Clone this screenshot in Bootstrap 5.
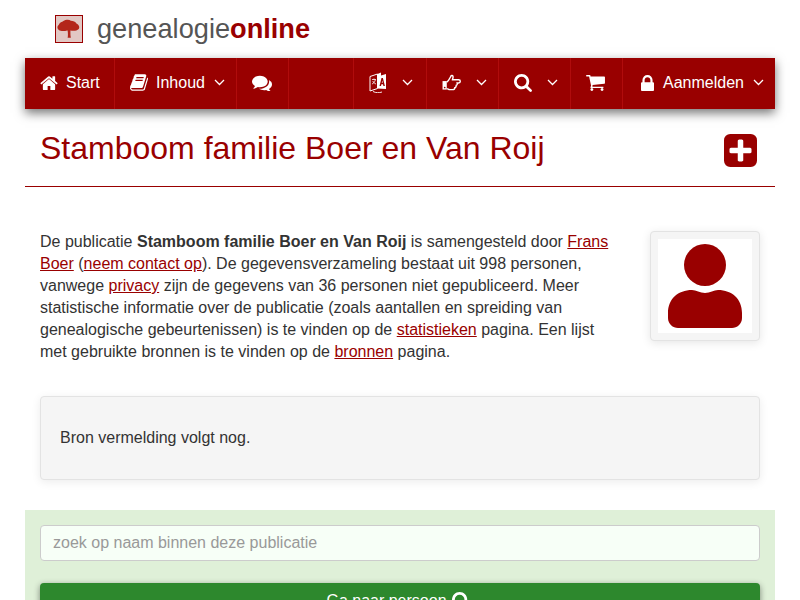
<!DOCTYPE html>
<html lang="nl">
<head>
  <meta charset="UTF-8">
  <title>Stamboom familie Boer en Van Roij</title>
  <meta name="viewport" content="width=device-width, initial-scale=1">
  <link href="https://cdn.jsdelivr.net/npm/bootstrap@5.3.0/dist/css/bootstrap.min.css" rel="stylesheet">
  <style>
    body {
      font-family: "Liberation Sans", Arial, sans-serif;
      font-size: 16px;
      line-height: 22px;
      color: #333;
      background: #fff;
    }
    a { color: #900; }
    svg { fill: currentColor; display: block; }
    .page-wrap { width: 750px; margin: 0 auto; }

    .site-head { height: 58px; padding-left: 30px; gap: 14px; }
    .site-logo { width: 28px; height: 28px; border: 1px solid #900; background: #e2c8c4; color: #b3261a; }
    .site-logo svg { filter: blur(.4px); }
    .site-name { font-size: 27.2px; color: #555; }
    .site-name b { color: #900; }

    .main-nav {
      height: 51px;
      padding: 0;
      background: #900;
      box-shadow: 0 4px 10px rgba(0, 0, 0, .55);
      flex-wrap: nowrap;
    }
    .main-nav.navbar-expand .navbar-nav .nav-link {
      height: 51px;
      padding: 0 0 2px 15px;
      gap: 8px;
      color: #fff;
      border-right: 1px solid #b00c0c;
    }
    .main-nav.navbar-expand .navbar-nav .nav-last .nav-link { border-right: 0; padding-left: 18px; gap: 9px; }
    .nav-pre { border-right: 1px solid #b00c0c; width: 65px; height: 51px; }
    .nav-w52 { width: 52px; }
    .nav-w72 { width: 72px; }
    .nav-w73 { width: 73px; }
    .nav-w90 { width: 90px; }
    .nav-w122 { width: 122px; }
    .nav-w152 { width: 152px; }
    .nav-drop { width: 11px; height: 7px; margin-left: 1px; fill: none; stroke: #fff; stroke-width: 1.3; }
    .nav-drop-far { margin-left: 7px; }

    .title-row { height: 78px; padding: 0 18px 0 15px; border-bottom: 1px solid #900; }
    .title-row h1 { font-size: 32px; line-height: 36px; margin: 1px 0 0; color: #900; font-weight: 400; }
    .add-icon { width: 33px; height: 33px; color: #900; margin-top: 5px; }

    .intro-row { padding: 44px 15px 0; gap: 25px; }
    .intro-text { width: 585px; margin: 0; }
    .person-thumb {
      width: 110px;
      height: 110px;
      padding: 7px;
      background: #f5f5f5;
      border: 1px solid #e3e3e3;
      border-radius: 4px;
      box-shadow: 0 2px 10px rgba(0, 0, 0, .1);
    }
    .person-thumb svg { background: #fff; color: #900; }

    .source-box {
      margin: 33px 15px 30px;
      padding: 30px 19px;
      background: #f5f5f5;
      border: 1px solid #e3e3e3;
      border-radius: 4px;
      box-shadow: 0 2px 10px rgba(0, 0, 0, .08);
    }

    .find-box { background: #dff0d8; padding: 15px; }
    .find-box .form-control {
      height: 36px;
      padding: 6px 12px;
      font-size: 16px;
      line-height: 22px;
      color: #333;
      background: #f7fff7;
      border-color: #ccc;
      border-radius: 4px;
      margin-bottom: 22px;
    }
    .find-box .form-control::placeholder { color: #999; }
    .find-btn {
      height: 36px;
      padding: 6px 16px 6px 12px;
      font-size: 16px;
      line-height: 22px;
      color: #fff;
      background: #2d882d;
      border: 0;
      border-radius: 4px;
      box-shadow: 0 2px 6px rgba(0, 0, 0, .45);
      gap: 5px;
    }
  </style>
</head>
<body>

<div class="page-wrap">

  <div class="site-head d-flex align-items-center">
    <div class="site-logo">
      <svg viewBox="0 0 28 28" width="26" height="26">
        <path d="M12 15.500c-3 1-7 1-9-.5-2-1.500-2-4 0-5.500 1-2.500 3.500-3 5-4 2-1.500 6-2 8-.5 2.500 0 5 1 6 3 2.500 1 4 4 2.500 6-2 2-6 2.500-9 1.500v2c0 2 0 4 .5 6h-3.500c.5-2 .5-5 0-8z"/>
      </svg>
    </div>
    <div class="site-name">genealogie<b>online</b></div>
  </div>

  <nav class="navbar navbar-expand main-nav">
    <ul class="navbar-nav">
      <li class="nav-item nav-w90">
        <a class="nav-link d-flex align-items-center" href="#">
          <svg viewBox="64 128 1664 1408" width="18" height="15"><path d="M1472 992v480q0 26-19 45t-45 19h-384v-384h-256v384h-384q-26 0-45-19t-19-45v-480q0-1 .5-3t.5-3l575-474 575 474q1 2 1 6zm223-69l-62 74q-8 9-21 11h-3q-13 0-21-7l-692-577-692 577q-12 8-24 7-13-2-21-11l-62-74q-8-10-7-23.500t11-21.500l719-599q32-26 76-26t76 26l244 204v-195q0-14 9-23t23-9h192q14 0 23 9t9 23v408l219 182q10 8 11 21.500t-7 23.500z"/></svg>
          Start
        </a>
      </li>
      <li class="nav-item nav-w122">
        <a class="nav-link d-flex align-items-center" href="#">
          <svg viewBox="64 128 1664 1536" width="18" height="17"><path d="M1703 478q40 57 18 129l-275 906q-19 64-76.500 107.500t-122.500 43.500h-923q-77 0-148.500-53.500t-99.500-131.500q-24-67-2-127 0-4 3-27t4-37q1-8-3-21.500t-3-19.500q2-11 8-21t16.500-23.500 16.500-23.500q23-38 45-91.500t30-91.500q3-10 .5-30t-.5-28q3-11 17-28t17-23q21-36 42-92t25-90q1-9-2.500-32t.5-28q4-13 22-30.500t22-22.500q19-26 42.500-84.500t27.500-96.500q1-8-3-25.500t-2-26.500q2-8 9-18t18-23 17-21q8-12 16.500-30.500t15-35 16-36 19.500-32 26.500-23.500 36-11.500 47.500 5.500l-1 3q38-9 51-9h761q74 0 114 56t18 130l-274 906q-36 119-71.500 153.500t-128.500 34.500h-869q-27 0-38 15-11 16-1 43 24 70 144 70h923q29 0 56-15.500t35-41.500l300-987q7-22 5-57 38 15 59 43zm-1064 2q-4 13 2 22.500t20 9.500h608q13 0 25.500-9.500t16.500-22.500l21-64q4-13-2-22.500t-20-9.500h-608q-13 0-25.500 9.500t-16.500 22.500zm-83 256q-4 13 2 22.500t20 9.500h608q13 0 25.500-9.500t16.500-22.500l21-64q4-13-2-22.500t-20-9.500h-608q-13 0-25.500 9.500t-16.500 22.500z"/></svg>
          Inhoud
          <svg class="nav-drop" viewBox="0 0 11 7"><path d="M1 1l4.500 4.500L10 1"/></svg>
        </a>
      </li>
      <li class="nav-item nav-w52">
        <a class="nav-link d-flex align-items-center" href="#">
          <svg viewBox="0 192 1792 1408" width="20" height="16"><path d="M1408 768q0 139-94 257t-256.500 186.500-353.500 68.500q-86 0-176-16-124 88-278 128-36 9-86 16h-3q-11 0-20.500-8t-11.500-21q-1-3-1-6.500t.5-6.500 2-6l2.500-5 3.500-5.500 4-5 4.500-5 4-4.500q5-6 23-25t26-29.500 22.500-29 25-38.500 20.500-44q-124-72-195-177t-71-224q0-139 94-257t256.500-186.500 353.500-68.500 353.500 68.500 256.500 186.500 94 257zm384 256q0 120-71 224.500t-195 176.500q10 24 20.500 44t25 38.500 22.500 29 26 29.500 23 25q1 1 4 4.500t4.500 5 4 5 3.500 5.500l2.500 5 2 6 .5 6.500-1 6.500q-3 14-13 22t-22 7q-50-7-86-16-154-40-278-128-90 16-176 16-271 0-472-132 58 4 88 4 161 0 309-45t264-129q125-92 192-212t67-254q0-77-23-152 129 71 204 178t75 230z"/></svg>
        </a>
      </li>
    </ul>

    <ul class="navbar-nav ms-auto">
      <li class="nav-item nav-pre"></li>
      <li class="nav-item nav-w73">
        <a class="nav-link d-flex align-items-center" href="#">
          <svg viewBox="0 0 18 21" width="18" height="21">
            <path d="M1 4.500l7.500-2.500v14.500L1 19z" fill="none" stroke="#fff"/>
            <path d="M8.500 2L12 .5v3l5-1.500v15l-8.500-.5z"/>
            <path d="M3 7.500h4M5 6.500v1M6.300 8c-.5 2-2 3.500-3.300 4M3.800 9c.5 1.500 2 2.500 3.200 3" fill="none" stroke="#fff" stroke-width=".8"/>
            <path d="M10.500 14l2-8h1.400l2 8h-1.500l-.4-1.800h-1.600L12 14zm2.300-3.200h1l-.5-2.300z" fill="#900"/>
            <path d="M4 19.500c3 1.500 6 1.500 9 .5" fill="none" stroke="#fff" stroke-width=".9"/>
          </svg>
          <svg class="nav-drop nav-drop-far" viewBox="0 0 11 7"><path d="M1 1l4.500 4.500L10 1"/></svg>
        </a>
      </li>
      <li class="nav-item nav-w72">
        <a class="nav-link d-flex align-items-center" href="#">
          <svg viewBox="0 0 20 18" width="19" height="17">
            <path d="M.5 7.500h4.500v9H.5z"/>
            <path d="M5 8.500C7 7.500 8 5 9 3c.5-1.500 2-2 2.600-.5.4 1.500-.6 3-.6 3.500h6.500c2.400 0 2.400 3.500 0 3.500H16c.5 1.500-.5 2.500-1 2.500 0 1.500-1 2.500-1.500 2.500 0 1.500-1.500 2-2.500 2H8c-1 0-2-1-3-1" fill="none" stroke="#fff" stroke-width="1.500"/>
            <circle cx="2.800" cy="14.300" r=".9" fill="#900"/>
          </svg>
          <svg class="nav-drop nav-drop-far" viewBox="0 0 11 7"><path d="M1 1l4.500 4.500L10 1"/></svg>
        </a>
      </li>
      <li class="nav-item nav-w72">
        <a class="nav-link d-flex align-items-center" href="#">
          <svg viewBox="64 128 1664 1664" width="18" height="18"><path d="M1216 832q0-185-131.500-316.500t-316.500-131.500-316.500 131.500-131.500 316.500 131.500 316.500 316.500 131.500 316.500-131.500 131.500-316.500zm512 832q0 52-38 90t-90 38q-54 0-90-38l-343-342q-179 124-399 124-143 0-273.500-55.500t-225-150-150-225-55.500-273.500 55.500-273.500 150-225 225-150 273.500-55.500 273.500 55.500 225 150 150 225 55.500 273.500q0 220-124 399l343 343q37 37 37 90z"/></svg>
          <svg class="nav-drop nav-drop-far" viewBox="0 0 11 7"><path d="M1 1l4.500 4.500L10 1"/></svg>
        </a>
      </li>
      <li class="nav-item nav-w52">
        <a class="nav-link d-flex align-items-center" href="#">
          <svg viewBox="64 256 1664 1408" width="19" height="16"><path d="M704 1536q0 52-38 90t-90 38-90-38-38-90 38-90 90-38 90 38 38 90zm896 0q0 52-38 90t-90 38-90-38-38-90 38-90 90-38 90 38 38 90zm128-1088v512q0 24-16.500 42.500t-40.500 21.500l-1044 122q13 60 13 70 0 16-24 64h920q26 0 45 19t19 45-19 45-45 19h-1024q-26 0-45-19t-19-45q0-11 8-31.500t16-36 21.500-40 15.500-29.500l-177-823h-204q-26 0-45-19t-19-45 19-45 45-19h256q16 0 28.500 6.500t19.500 15.500 13 24.500 8 26 5.500 29.500 4.500 26h1201q26 0 45 19t19 45z"/></svg>
        </a>
      </li>
      <li class="nav-item nav-last nav-w152">
        <a class="nav-link d-flex align-items-center" href="#">
          <svg viewBox="320 128 1152 1408" width="13" height="16"><path d="M640 768h512v-192q0-106-75-181t-181-75-181 75-75 181v192zm832 96v576q0 40-28 68t-68 28h-960q-40 0-68-28t-28-68v-576q0-40 28-68t68-28h32v-192q0-184 132-316t316-132 316 132 132 316v192h32q40 0 68 28t28 68z"/></svg>
          Aanmelden
          <svg class="nav-drop ms-0" viewBox="0 0 11 7"><path d="M1 1l4.500 4.500L10 1"/></svg>
        </a>
      </li>
    </ul>
  </nav>

  <div class="title-row d-flex align-items-center justify-content-between">
    <h1>Stamboom familie Boer en Van Roij</h1>
    <svg class="add-icon" viewBox="128 128 1536 1536"><path d="M1408 960v-128q0-26-19-45t-45-19h-320v-320q0-26-19-45t-45-19h-128q-26 0-45 19t-19 45v320h-320q-26 0-45 19t-19 45v128q0 26 19 45t45 19h320v320q0 26 19 45t45 19h128q26 0 45-19t19-45v-320h320q26 0 45-19t19-45zm256-544v960q0 119-84.500 203.500t-203.500 84.500h-960q-119 0-203.500-84.500t-84.500-203.500v-960q0-119 84.500-203.500t203.500-84.500h960q119 0 203.500 84.500t84.500 203.500z"/></svg>
  </div>

  <div class="intro-row d-flex align-items-start">
    <p class="intro-text">De publicatie <strong>Stamboom familie Boer en Van Roij</strong> is samengesteld door <a href="#">Frans Boer</a> (<a href="#">neem contact op</a>). De gegevensverzameling bestaat uit 998 personen, vanwege <a href="#">privacy</a> zijn de gegevens van 36 personen niet gepubliceerd. Meer statistische informatie over de publicatie (zoals aantallen en spreiding van genealogische gebeurtenissen) is te vinden op de <a href="#">statistieken</a> pagina. Een lijst met gebruikte bronnen is te vinden op de <a href="#">bronnen</a> pagina.</p>
    <div class="person-thumb">
      <svg viewBox="0 0 94 94" width="94" height="94">
        <circle cx="47" cy="26" r="21"/>
        <path d="M10 74c0-14 10-23 24-23 4 0 8 3 13 3s9-3 13-3c14 0 24 9 24 23v5c0 6-5 10-10 10H20c-5 0-10-4-10-10z"/>
      </svg>
    </div>
  </div>

  <div class="source-box">Bron vermelding volgt nog.</div>

  <div class="find-box">
    <input type="text" class="form-control" placeholder="zoek op naam binnen deze publicatie">
    <button class="btn find-btn w-100 d-flex align-items-center justify-content-center">
      Ga naar persoon
      <svg viewBox="64 128 1664 1664" width="18" height="18"><path d="M1216 832q0-185-131.500-316.500t-316.500-131.500-316.500 131.500-131.500 316.500 131.500 316.500 316.500 131.500 316.500-131.500 131.500-316.500zm512 832q0 52-38 90t-90 38q-54 0-90-38l-343-342q-179 124-399 124-143 0-273.500-55.500t-225-150-150-225-55.500-273.500 55.500-273.500 150-225 225-150 273.500-55.500 273.500 55.500 225 150 150 225 55.500 273.500q0 220-124 399l343 343q37 37 37 90z"/></svg>
    </button>
  </div>

</div>

</body>
</html>
